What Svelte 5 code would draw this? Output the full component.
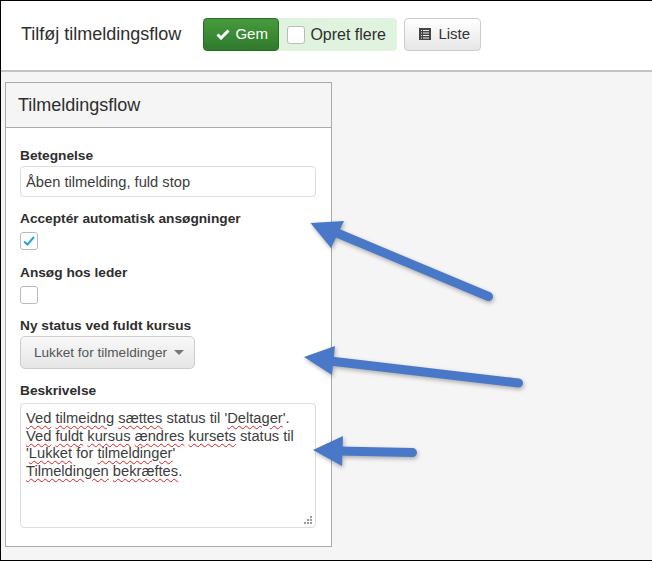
<script>
  // the three callout arrows drawn over the form
  const arrows = [
    { line: 'M337 233 L488.5 296.5', head: '310.5,223 344,221 331,248' },
    { line: 'M330 361 L518.5 383', head: '304,357 335,346 332,375' },
    { line: 'M338 451 L412.5 452.5', head: '313,450 343,436 342,466' }
  ];

  let description = [
    [['Ved', 1], ' ', ['tilmeidng', 1], ' ', ['sættes', 1], ' status til \'', ['Deltager', 1], '\'.'],
    [['Ved', 1], ' ', ['fuldt', 1], ' ', ['kursus', 1], ' ', ['ændres', 1], ' ', ['kursets', 1], ' status til'],
    ['\'', ['Lukket', 1], ' for ', ['tilmeldinger', 1], '\''],
    [['Tilmeldingen', 1], ' ', ['bekræftes', 1], '.']
  ];
</script>

<div class="page">
  <header class="topbar">
    <h1>Tilføj tilmeldingsflow</h1>
    <div class="save-group">
      <button class="btn btn-save">
        <svg width="14" height="12" viewBox="0 0 14 12"><path d="M1.5 6.5 L5 10 L12.5 2.5" fill="none" stroke="#fff" stroke-width="3"/></svg>
        Gem
      </button>
      <div class="more">
        <span class="check"></span>
        Opret flere
      </div>
    </div>
    <button class="btn btn-list">
      <svg width="14" height="14" viewBox="0 0 14 14">
        <rect x="1" y="1" width="12" height="12" fill="#444"/>
        <path d="M3 3.5h1M5 3.5h6M3 6h1M5 6h6M3 8.500h1M5 8.500h6M3 11h1M5 11h6" stroke="#eee" stroke-width="1"/>
      </svg>
      Liste
    </button>
  </header>

  <main class="content">
    <section class="panel">
      <div class="panel-title">Tilmeldingsflow</div>
      <div class="panel-body">
        <div class="field">
          <label for="name">Betegnelse</label>
          <input id="name" type="text" value="Åben tilmelding, fuld stop" />
        </div>
        <div class="field with-check">
          <span class="label">Acceptér automatisk ansøgninger</span>
          <span class="check">
            <svg width="14" height="12" viewBox="0 0 14 12"><path d="M2 6.500 L5.500 9.500 L12 2" fill="none" stroke="#2a9fe0" stroke-width="2"/></svg>
          </span>
        </div>
        <div class="field with-check">
          <span class="label">Ansøg hos leder</span>
          <span class="check"></span>
        </div>
        <div class="field">
          <span class="label">Ny status ved fuldt kursus</span>
          <button class="btn btn-select">Lukket for tilmeldinger <i class="caret"></i></button>
        </div>
        <div class="field last">
          <span class="label">Beskrivelse</span>
          <div class="textarea">
            {#each description as row}
              <div>
                {#each row as part}
                  {#if typeof part === 'string'}{part}{:else}<span class="typo">{part[0]}</span>{/if}
                {/each}
              </div>
            {/each}
            <svg class="grip" width="10" height="10" viewBox="0 0 10 10" fill="#999">
              <rect x="7" y="1" width="2" height="2"/><rect x="4" y="4" width="2" height="2"/><rect x="7" y="4" width="2" height="2"/>
              <rect x="1" y="7" width="2" height="2"/><rect x="4" y="7" width="2" height="2"/><rect x="7" y="7" width="2" height="2"/>
            </svg>
          </div>
        </div>
      </div>
    </section>
  </main>

  <svg class="arrows" width="652" height="561" viewBox="0 0 652 561">
    {#each arrows as a}
      <g>
        <path d={a.line} stroke="#4a78c8" stroke-width="9" stroke-linecap="round" fill="none"/>
        <polygon points={a.head} fill="#4a78c8"/>
      </g>
    {/each}
  </svg>
</div>

<style>
  :global(body) {
    margin: 0;
    font-family: "Liberation Sans", Arial, sans-serif;
  }

  .page {
    position: relative;
    box-sizing: border-box;
    width: 652px;
    height: 561px;
    border-top: 1px solid #000;
    border-left: 1px solid #000;
    border-bottom: 1px solid #000;
    background: #f5f5f5;
    color: #2e2e2e;
    overflow: hidden;
  }

  .topbar {
    box-sizing: border-box;
    height: 71px;
    display: flex;
    align-items: center;
    padding: 0 0 2px 20px;
    background: #fff;
    border-bottom: 2px solid #c4c4c4;
  }

  h1 {
    margin: 0 22px 0 0;
    font-size: 18px;
    font-weight: 400;
  }

  .btn {
    box-sizing: border-box;
    font-family: inherit;
    font-size: 15px;
    display: inline-flex;
    align-items: center;
    cursor: pointer;
  }

  .save-group {
    display: flex;
    height: 33px;
    background: #dff3df;
    border-radius: 4px;
    margin-right: 7px;
  }

  .btn-save {
    height: 33px;
    width: 76px;
    padding: 0 0 2px 12px;
    gap: 5px;
    color: #fff;
    background: linear-gradient(#489a3e, #2f7a2c);
    border: 1px solid #2a6b28;
    border-radius: 4px;
  }

  .more {
    display: flex;
    align-items: center;
    gap: 5px;
    padding-left: 8px;
    width: 118px;
    box-sizing: border-box;
    font-size: 16px;
  }

  .check {
    box-sizing: border-box;
    width: 18px;
    height: 18px;
    display: flex;
    align-items: center;
    justify-content: center;
    background: #fff;
    border: 1px solid #bbb;
    border-radius: 3px;
  }

  .btn-list {
    height: 33px;
    width: 77px;
    padding: 0 0 2px 13px;
    gap: 6px;
    color: #333;
    background: linear-gradient(#fff, #e6e6e6);
    border: 1px solid #ccc;
    border-radius: 4px;
  }

  .content {
    padding: 10px 0 0 4px;
  }

  .panel {
    box-sizing: border-box;
    width: 327px;
    height: 465px;
    background: #fff;
    border: 1px solid #aaa;
  }

  .panel-title {
    box-sizing: border-box;
    height: 45px;
    display: flex;
    align-items: center;
    padding-left: 12px;
    font-size: 18px;
    background: #f5f5f5;
    border-bottom: 1px solid #aaa;
  }

  .panel-body {
    padding: 20px 15px 0 14px;
    display: flex;
    flex-direction: column;
  }

  .field {
    display: flex;
    flex-direction: column;
    align-items: flex-start;
    gap: 2px;
    margin-bottom: 14px;
  }

  .field.with-check {
    gap: 5px;
    margin-bottom: 14px;
  }

  /* first checkbox row sits a pixel further from the next label */
  .field.with-check:nth-child(2) {
    margin-bottom: 15px;
  }

  .field.last {
    gap: 4px;
    margin-bottom: 0;
  }

  label,
  .label {
    font-size: 13.7px;
    font-weight: 700;
    line-height: 16px;
  }

  input {
    box-sizing: border-box;
    width: 296px;
    height: 31px;
    padding: 0 5px;
    font-family: inherit;
    font-size: 14.7px;
    color: #3c3c3c;
    background: #fff;
    border: 1px solid #ddd;
    border-radius: 4px;
    outline: none;
  }

  .btn-select {
    height: 33px;
    width: 175px;
    padding: 0 0 0 13px;
    color: #555;
    background: linear-gradient(#f8f8f8, #e6e6e6);
    border: 1px solid #ccc;
    border-radius: 5px;
    font-size: 13.6px;
  }

  .caret {
    width: 0;
    height: 0;
    margin-left: 7px;
    border-left: 5px solid transparent;
    border-right: 5px solid transparent;
    border-top: 5px solid #777;
  }

  .textarea {
    position: relative;
    box-sizing: border-box;
    width: 296px;
    height: 125px;
    padding: 6px 5px;
    font-size: 14.7px;
    line-height: 17.5px;
    color: #3c3c3c;
    background: #fff;
    border: 1px solid #ddd;
    border-radius: 4px;
    white-space: pre-wrap;
  }

  .typo {
    text-decoration: underline wavy #e02020 1px;
    text-underline-offset: 2px;
  }

  .grip {
    position: absolute;
    right: 2px;
    bottom: 2px;
  }

  .arrows {
    position: absolute;
    left: -1px;
    top: -1px;
    filter: drop-shadow(1px 2px 2px rgba(0, 0, 0, 0.3));
    pointer-events: none;
  }
</style>
